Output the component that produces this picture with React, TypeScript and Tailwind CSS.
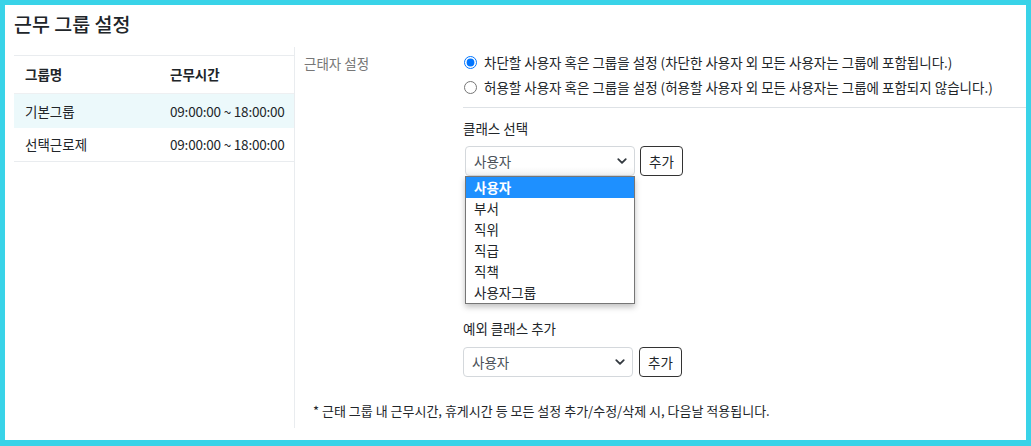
import { useState } from "react";

const classOptions = ["사용자", "부서", "직위", "직급", "직책", "사용자그룹"];

const groups = [
  { name: "기본그룹", time: "09:00:00 ~ 18:00:00", active: true },
  { name: "선택근로제", time: "09:00:00 ~ 18:00:00", active: false },
];

function Chevron() {
  return (
    <svg width="12" height="12" viewBox="0 0 16 16" className="text-[#343a40]">
      <path d="M3 5.5l5 5 5-5" fill="none" stroke="currentColor" strokeWidth="2.4" strokeLinecap="round" strokeLinejoin="round" />
    </svg>
  );
}

function SelectBox({ value, className = "" }: { value: string; className?: string }) {
  return (
    <div
      className={`flex items-center justify-between h-[30px] w-[170px] rounded-[4px] border border-[#d4d8dc] pl-[8px] pr-[6px] text-[13.5px] text-[#495057] ${className}`}
    >
      <span>{value}</span>
      <Chevron />
    </div>
  );
}

function AddButton() {
  return (
    <button className="h-[30px] w-[43px] rounded-[4px] border border-[#333] text-[13.5px] text-[#212529]">
      추가
    </button>
  );
}

export default function App() {
  const [mode, setMode] = useState("block");

  return (
    <div
      className="w-[1031px] h-[446px] bg-[#39d3e8] pt-[5px] pl-[5px] pr-[5px] pb-[6px]"
      style={{ fontFamily: '"Noto Sans CJK KR", "Noto Sans", sans-serif' }}
    >
      <div className="h-full bg-white">
        <h1 className="pl-[9px] pt-[5px] h-[42px] text-[19.5px] leading-[27px] font-medium text-[#212529]">
          근무 그룹 설정
        </h1>

        <div className="flex">
          {/* group list */}
          <div className="ml-[9px] w-[280px] pt-[8px]">
            <div className="border-t border-b border-[#e9ecef] text-[13.5px] text-[#212529]">
              <div className="flex h-[38px] items-center font-bold border-b border-[#eef0f2]">
                <div className="w-[156px] pl-[11px]">그룹명</div>
                <div>근무시간</div>
              </div>
              {groups.map((g) => (
                <div
                  key={g.name}
                  className={`flex items-center ${g.active ? "h-[34px] bg-[#ecf9fb]" : "h-[33px]"}`}
                >
                  <div className="w-[156px] pl-[11px]">{g.name}</div>
                  <div className="tracking-[-0.2px]">{g.time}</div>
                </div>
              ))}
            </div>
          </div>

          {/* settings */}
          <div className="flex-1 h-[381px] border-l border-[#e9ecef]">
            <div className="flex">
              <div className="w-[168px] pl-[9px] pt-[6px] text-[13.5px] leading-[21px] text-[#777]">근태자 설정</div>
              <div className="flex-1">
                <div className="pt-[3px] pb-[7px] border-b border-[#dee2e6] text-[13.5px] text-[#212529]">
                  <label className="flex items-center h-[25px]">
                    <input
                      type="radio"
                      name="mode"
                      checked={mode === "block"}
                      onChange={() => setMode("block")}
                      className="m-0 ml-[1px] mr-[7px] w-[13px] h-[13px]"
                    />
                    차단할 사용자 혹은 그룹을 설정 (차단한 사용자 외 모든 사용자는 그룹에 포함됩니다.)
                  </label>
                  <label className="flex items-center h-[25px]">
                    <input
                      type="radio"
                      name="mode"
                      checked={mode === "allow"}
                      onChange={() => setMode("allow")}
                      className="m-0 ml-[1px] mr-[7px] w-[13px] h-[13px]"
                    />
                    허용할 사용자 혹은 그룹을 설정 (허용할 사용자 외 모든 사용자는 그룹에 포함되지 않습니다.)
                  </label>
                </div>

                <div className="pt-[10px] text-[13.5px] leading-[21px] text-[#212529]">클래스 선택</div>
                <div className="relative mt-[7px] flex gap-[5px] pl-[2px]">
                  <SelectBox value="사용자" className="bg-gradient-to-b from-white from-70% to-[#f3f3f3]" />
                  <AddButton />
                  <ul className="absolute left-[2px] top-[30px] w-[170px] border border-[#767676] bg-white text-[13.5px] text-[#212529] shadow-[0_3px_6px_rgba(0,0,0,0.25)] z-10">
                    {classOptions.map((o, i) => (
                      <li
                        key={o}
                        className={`h-[21px] leading-[21px] pl-[8px] ${i === 0 ? "bg-[#1e90ff] text-white font-bold" : ""}`}
                      >
                        {o}
                      </li>
                    ))}
                  </ul>
                </div>

                <div className="pt-[142px] text-[13.5px] leading-[21px] text-[#212529]">예외 클래스 추가</div>
                <div className="mt-[8px] flex gap-[6px]">
                  <SelectBox value="사용자" />
                  <AddButton />
                </div>
              </div>
            </div>
            <p className="pl-[18px] pt-[24px] text-[13px] leading-[20px] text-[#212529]">
              * 근태 그룹 내 근무시간, 휴게시간 등 모든 설정 추가/수정/삭제 시, 다음날 적용됩니다.
            </p>
          </div>
        </div>
      </div>
    </div>
  );
}
